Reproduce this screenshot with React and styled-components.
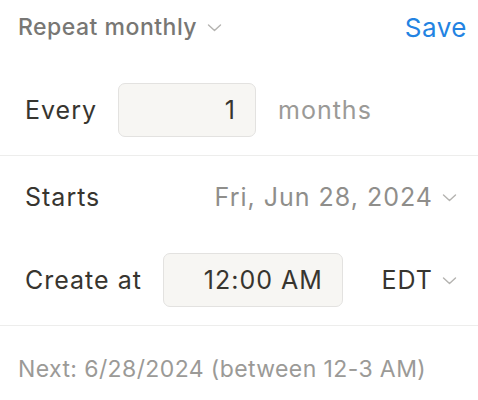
import React from "react";
import styled, { createGlobalStyle } from "styled-components";

const GlobalStyle = createGlobalStyle`
    body {
        margin: 0;
        background: #ffffff;
        font-family: Inter, "Noto Sans", sans-serif;
        color: #37352f;
    }
`;

function Chevron({ color = "#b4b3b0", size = 15 }) {
    return (
        <svg width={size} height={size} viewBox="0 0 15 15" fill="none">
            <path d="M1.5 5l6 5.5 6-5.5" stroke={color} strokeWidth="1.4" strokeLinecap="round" strokeLinejoin="round" />
        </svg>
    );
}

function App() {
    return (
        <Panel>
            <GlobalStyle />
            <Header>
                <RepeatMenu>
                    Repeat monthly
                    <Chevron />
                </RepeatMenu>
                <SaveButton>Save</SaveButton>
            </Header>
            <Section $top={29} $bottom={18}>
                <Row>
                    <Label>Every</Label>
                    <Field $width={138}>1</Field>
                    <Unit>months</Unit>
                </Row>
            </Section>
            <Section $top={14} $bottom={18}>
                <Row $between>
                    <Label>Starts</Label>
                    <Select $muted>
                        Fri, Jun 28, 2024
                        <Chevron />
                    </Select>
                </Row>
                <Row $between>
                    <Group>
                        <Label>Create at</Label>
                        <Field $width={180}>12:00 AM</Field>
                    </Group>
                    <Select>
                        EDT
                        <Chevron />
                    </Select>
                </Row>
            </Section>
            <Footer>Next: 6/28/2024 (between 12-3 AM)</Footer>
        </Panel>
    );
}

export default App;

const Panel = styled.div`
    width: 478px;
    height: 400px;
    background: #ffffff;
    overflow: hidden;
`;

const Header = styled.div`
    display: flex;
    justify-content: space-between;
    align-items: center;
    height: 54px;
    padding: 0 11px 0 18px;
`;

const RepeatMenu = styled.div`
    display: flex;
    align-items: center;
    gap: 10px;
    font-size: 23px;
    font-weight: 500;
    letter-spacing: 0.5px;
    color: #787774;
`;

const SaveButton = styled.div`
    font-size: 26px;
    letter-spacing: 0.5px;
    color: #2383e2;
`;

const Section = styled.div`
    display: flex;
    flex-direction: column;
    gap: 29px;
    padding: ${(p) => p.$top}px 21px ${(p) => p.$bottom}px 25px;
    border-bottom: 1px solid #ededec;
`;

const Row = styled.div`
    display: flex;
    align-items: center;
    justify-content: ${(p) => (p.$between ? "space-between" : "flex-start")};
    height: 54px;
    font-size: 25px;
    letter-spacing: 1px;
`;

const Group = styled.div`
    display: flex;
    align-items: center;
`;

const Label = styled.div`
    color: #37352f;
    margin-right: 21px;
`;

const Field = styled.div`
    box-sizing: border-box;
    width: ${(p) => p.$width}px;
    height: 54px;
    display: flex;
    align-items: center;
    justify-content: flex-end;
    padding: 0 19px;
    background: #f7f6f3;
    border: 1.5px solid #e3e2e0;
    border-radius: 7px;
    color: #37352f;
`;

const Unit = styled.div`
    color: #9b9a97;
    margin-left: 22px;
`;

const Select = styled.div`
    display: flex;
    align-items: center;
    gap: 9px;
    color: ${(p) => (p.$muted ? "#8f8e8b" : "#37352f")};
`;

const Footer = styled.div`
    padding: 32px 18px 0;
    font-size: 23px;
    letter-spacing: 0.4px;
    line-height: 22px;
    color: #9b9a97;
`;
